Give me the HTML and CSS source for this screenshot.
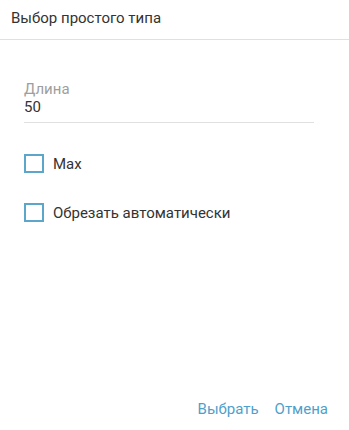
FILE: index.html
```html
<!DOCTYPE html>
<html lang="ru">
<head>
<meta charset="utf-8">
<link rel="stylesheet" href="styles.css">
</head>
<body>
<div class="dialog">
  <div class="header">Выбор простого типа</div>
  <div class="content">
    <div class="field">
      <div class="field-label">Длина</div>
      <div class="field-value">50</div>
    </div>
    <label class="check">
      <span class="box"></span>
      <span class="check-text">Max</span>
    </label>
    <label class="check">
      <span class="box"></span>
      <span class="check-text">Обрезать автоматически</span>
    </label>
  </div>
  <div class="actions">
    <span class="btn">Выбрать</span>
    <span class="btn">Отмена</span>
  </div>
</div>
</body>
</html>
```
FILE: styles.css
```css
html, body {
  margin: 0;
  padding: 0;
  background: #ffffff;
}
body {
  font-family: Roboto, "Noto Sans", sans-serif;
  color: #333333;
  width: 349px;
  height: 430px;
}
.dialog {
  display: flex;
  flex-direction: column;
  height: 430px;
}
.header {
  height: 40px;
  box-sizing: border-box;
  padding: 9px 11px 0;
  font-size: 15px;
  line-height: 18px;
  border-bottom: 1px solid #e0e0e0;
  color: #333333;
}
.content {
  flex: 1;
  padding: 40px 35px 0 24px;
}
.field {
  border-bottom: 1px solid #e0e0e0;
  padding-bottom: 6px;
  margin-bottom: 31px;
}
.field-label {
  font-size: 15px;
  line-height: 18px;
  color: #9e9e9e;
}
.field-value {
  font-size: 15px;
  line-height: 18px;
  color: #333333;
}
.check {
  display: flex;
  align-items: center;
  gap: 9px;
  height: 19px;
  margin-bottom: 30px;
}
.box {
  width: 20px;
  height: 19px;
  box-sizing: border-box;
  border: 2px solid #5ba6c9;
  flex: none;
}
.check-text {
  font-size: 15px;
  line-height: 18px;
  color: #333333;
}
.actions {
  display: flex;
  justify-content: flex-end;
  gap: 16px;
  padding: 0 21px 12px 0;
}
.btn {
  font-size: 15px;
  line-height: 18px;
  color: #4f9fcb;
}
```
